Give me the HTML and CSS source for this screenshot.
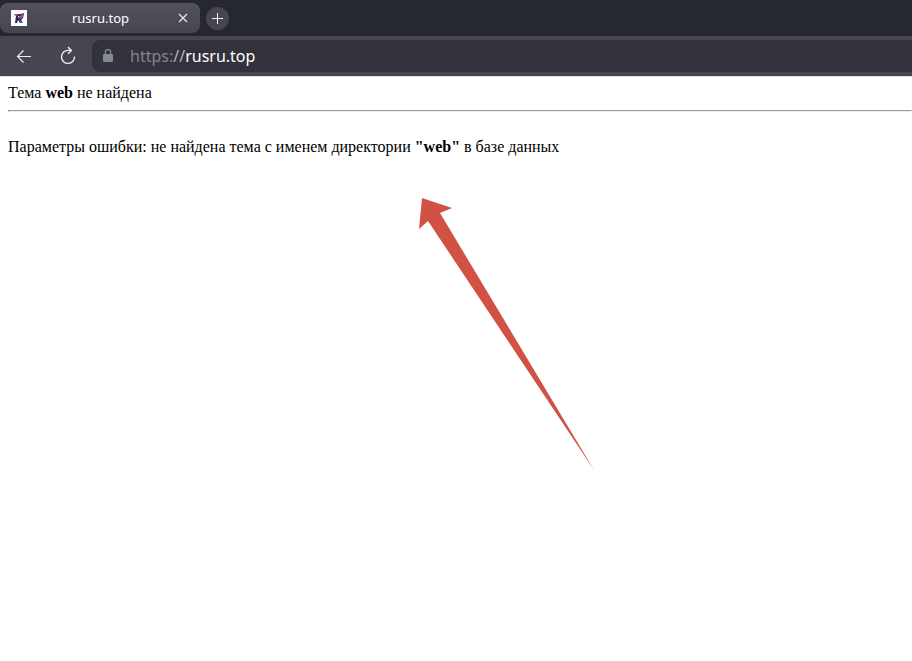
FILE: index.html
```html
<!DOCTYPE html>
<html lang="ru">
  <head>
    <meta charset="UTF-8" />
    <meta name="viewport" content="width=device-width, initial-scale=1.0" />
    <title>rusru.top</title>
    <link rel="stylesheet" href="styles.css">
  </head>
  <body>
    <header class="browser">
      <div class="tabs">
        <div class="tab">
          <svg class="favicon" width="16" height="16" viewBox="0 0 16 16">
            <rect width="16" height="16" fill="#fff" />
            <path d="M3 4h7l3-1-1 5-2 2 2 3H9L7 10l-1 3H4l1-7z" fill="#30265e" />
            <path d="M3 4h5L6 6zM8 7l5-4-1 4-3 2z" fill="#b0438d" />
            <path d="M7 6h2L7 8z" fill="#d9c9e8" />
            <path d="M8 10l4 3H9z" fill="#4f6ab0" />
          </svg>
          <span class="tab-title">rusru.top</span>
          <button class="close" type="button" aria-label="Закрыть">
            <svg width="10" height="10" viewBox="0 0 10 10">
              <path d="M1 1l8 8M9 1L1 9" stroke="#e8e8ea" stroke-width="1.2" />
            </svg>
          </button>
        </div>
        <button class="new-tab" type="button" aria-label="Новая вкладка">
          <svg width="11" height="11" viewBox="0 0 11 11">
            <path d="M5.5 0v11M0 5.5h11" stroke="#f0f0f2" />
          </svg>
        </button>
      </div>
      <div class="toolbar">
        <button class="tool" type="button" aria-label="Назад">
          <svg width="16" height="16" viewBox="0 0 16 16" fill="none" stroke="#ededef" stroke-width="1.2">
            <path d="M15 8.5H1.5M7.5 2.5l-6 6 6 6" />
          </svg>
        </button>
        <button class="tool" type="button" aria-label="Обновить">
          <svg width="16" height="20" viewBox="0 0 16 20" fill="none" stroke="#ededef" stroke-width="1.4">
            <path d="M14.5 10.5A6.5 6.5 0 1 1 8 4.4h3.5M8 1l3.4 3.4L8 7.8" />
          </svg>
        </button>
        <div class="address">
          <button class="lock" type="button" aria-label="Сведения о сайте">
            <svg width="10" height="14" viewBox="0 0 10 14">
              <path d="M2.3 6V3.4a2.7 2.7 0 0 1 5.4 0V6" fill="none" stroke="#858991" stroke-width="1.2" />
              <rect y="5" width="10" height="8" rx="1" fill="#858991" />
            </svg>
          </button>
          <a class="url" href="https://rusru.top"><span class="scheme">https:</span><span class="slashes">//</span>rusru.top</a>
        </div>
      </div>
    </header>

    <main class="page">
      Тема <b>web</b> не найдена
      <hr />
      <br />
      Параметры ошибки: не найдена тема с именем директории <b>"web"</b> в базе данных
      <svg class="arrow" width="178" height="274" viewBox="0 0 178 274">
        <path d="M4 1L34 11L22 16L176 273L10 24L1 32Z" fill="#d15145" />
      </svg>
    </main>
  </body>
</html>
```

FILE: styles.css
```css
body {
  margin: 0;
  background: #fff;
  color: #000;
  font-family: "Liberation Serif", serif;
  font-size: 16px;
  line-height: 18px;
}
button {
  display: flex;
  align-items: center;
  justify-content: center;
  padding: 0;
  border: none;
  background: none;
}
.browser {
  background: #252830;
  font-family: "Noto Sans", sans-serif;
}
.tabs {
  display: flex;
  align-items: center;
  gap: 6px;
  height: 30px;
  padding: 3px 0;
}
.tab {
  display: flex;
  align-items: center;
  box-sizing: border-box;
  width: 200px;
  height: 30px;
  padding: 0 8px 0 11px;
  border-radius: 8px;
  background: linear-gradient(#53525b, #474650);
}
.tab-title {
  flex: 1;
  color: #fff;
  font-size: 13px;
  text-align: center;
}
.close {
  width: 18px;
  height: 18px;
}
.new-tab {
  width: 23px;
  height: 23px;
  border-radius: 50%;
  background: #474650;
}
.toolbar {
  display: flex;
  align-items: center;
  height: 40px;
  padding-left: 2px;
  background: #474650;
}
.tool {
  width: 44px;
  height: 32px;
}
.address {
  display: flex;
  flex: 1;
  align-items: center;
  gap: 10px;
  height: 32px;
  margin-left: 2px;
  padding-left: 4px;
  border-radius: 8px 0 0 8px;
  background: #33323c;
}
.lock {
  width: 24px;
  height: 24px;
  border-radius: 6px;
  background: #32343d;
}
.url {
  color: #fff;
  font-size: 16px;
  text-decoration: none;
}
.scheme {
  color: #85848b;
}
.slashes {
  color: #b5b4b9;
}
.page {
  padding: 7px 0 0 8px;
  border-top: 1px solid #e3e1e3;
}
.page hr {
  margin: 8px 0;
}
.arrow {
  display: block;
  margin: 41px 0 0 410px;
}
```
